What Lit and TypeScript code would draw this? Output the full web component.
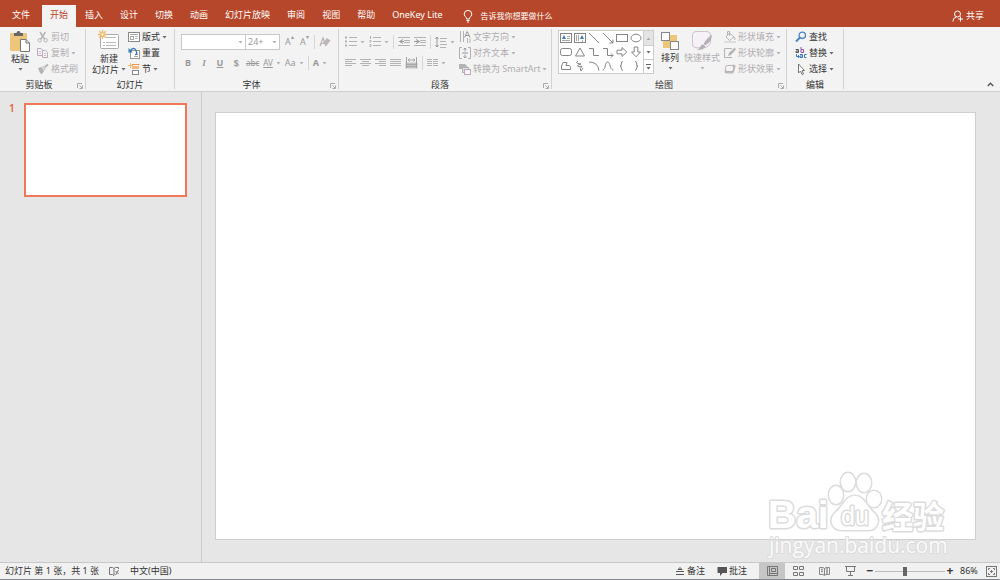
import { LitElement, html, svg, css, nothing } from "lit";
import { customElement, property, state } from "lit/decorators.js";

const G = "#b4b2b4";
const D = "#555";

const frame = (w: number, h: number, body: unknown) =>
  html`<svg width=${w} height=${h} viewBox="0 0 ${w} ${h}" fill="none" aria-hidden="true">${body}</svg>`;

const caret = (on = true) =>
  frame(5, 3, svg`<path d="M0.5 0H4.5L2.5 2.6Z" fill=${on ? "#666" : G} />`);

const lines = (rows: number[][]) =>
  svg`${rows.map((r) => svg`<path d="M${r[0]} ${r[2]}H${r[1]}" stroke=${G} />`)}`;

const icons = {
  paste: frame(22, 22, svg`
    <rect x="1" y="3" width="17" height="18" rx="1" fill="#edc67c" />
    <path d="M5 6V3H7.5Q7.5 1 9.5 1T11.5 3H14V6Z" fill="#666" />
    <path d="M11.5 9.5H17L20.5 13V21.5H11.5Z" fill="#fff" stroke="#777" />
    <path d="M17 9.5V13H20.5" stroke="#777" />`),
  cut: frame(12, 12, svg`
    <path d="M3 1L7.5 8M8.5 1L4 8" stroke=${G} stroke-width="1.4" />
    <circle cx="2.7" cy="9.3" r="1.7" stroke=${G} /><circle cx="8.7" cy="9.3" r="1.7" stroke=${G} />`),
  copy: frame(12, 12, svg`
    <path d="M0.5 1.5H4L5.5 3V8.5H0.5Z" fill="#f8f3f8" stroke="#b9aab8" />
    <path d="M5.5 3.5H8.5L10.5 5.5V10.5H5.5Z" fill="#f8f3f8" stroke="#b9aab8" />
    <path d="M2 4.5H4M2 6.5H4M7 6.5H9M7 8.5H9" stroke="#c9bfc9" />`),
  brush: frame(12, 12, svg`
    <path d="M1 5L4.5 4L7 8L4.5 11.5Q2 9 1 5Z" fill=${G} />
    <path d="M5 3.5L7 2.5L9 6L7.5 7.5Z" fill="#ccc" /><path d="M8 4L11 1.5" stroke=${G} stroke-width="1.8" />`),
  slide: frame(22, 22, svg`
    <rect x="2.5" y="4.5" width="18" height="14" rx="1" fill="#fff" stroke="#aaa" />
    <path d="M8 7.5H18M5 12.5H7M8 12.5H18M5 15.5H7M8 15.5H18" stroke="#bbb" />
    <path d="M4.5 0V9M0 4.5H9M1.3 1.3L7.7 7.7M7.7 1.3L1.3 7.7" stroke="#efb968" stroke-width="1.3" />
    <circle cx="4.5" cy="4.5" r="1.8" fill="#fff3df" stroke="#efb968" />`),
  layout: frame(12, 12, svg`
    <rect x="0.5" y="1.5" width="11" height="9" fill="#fff" stroke="#888" />
    <path d="M2 3.5H10" stroke="#aaa" /><rect x="2.5" y="5.5" width="3" height="3" stroke="#aaa" />
    <path d="M7 5.5H10M7 7.5H10" stroke="#bbb" />`),
  reset: frame(12, 12, svg`
    <rect x="2.5" y="3.5" width="9" height="8" fill="#fff" stroke="#999" />
    <path d="M6 9.5H10M8 7.5H10" stroke="#aaa" />
    <path d="M2 4Q6 -1 8 3.5T7 7.5" stroke="#3d79b8" stroke-width="1.4" /><path d="M0.5 1V5.5H5Z" fill="#3d79b8" />`),
  section: frame(12, 12, svg`
    <path d="M4 1.5H11.5" stroke="#e8954e" /><path d="M2.5 0V5M0 2.5H5" stroke="#efb968" />
    <rect x="4" y="3" width="7" height="3" fill="#f2b77f" />
    <rect x="4.5" y="7.5" width="6" height="4" fill="#fff" stroke="#888" />`),
  clear: frame(12, 12, svg`
    <path d="M1 10L4 2L7 10M2 7.5H6" stroke=${G} stroke-width="1.2" />
    <path d="M4 7L8 2L11.5 4.5L7.5 9.5Z" fill="#bcb6bc" />`),
  bullets: frame(12, 12, svg`
    ${lines([[4, 12, 1.5], [4, 12, 5.5], [4, 12, 9.5]])}
    <path d="M0 1.5H2M0 5.5H2M0 9.5H2" stroke=${G} stroke-width="2" />`),
  numbers: frame(12, 12, svg`
    ${lines([[4, 12, 1.5], [4, 12, 5.5], [4, 12, 9.5]])}
    <path d="M1.5 0V3M0.5 4.5H2V6H0.5M0.5 8.5H2V10.5H0.5" stroke=${G} />`),
  outdent: frame(12, 12, svg`
    ${lines([[0, 12, 1.5], [6, 12, 4.5], [6, 12, 6.5], [0, 12, 9.5]])}
    <path d="M5 3.5L1.5 5.5L5 7.5M2 5.5H6" stroke="#999" />`),
  indent: frame(12, 12, svg`
    ${lines([[0, 12, 1.5], [6, 12, 4.5], [6, 12, 6.5], [0, 12, 9.5]])}
    <path d="M2 3.5L5.5 5.5L2 7.5M0 5.5H5" stroke="#999" />`),
  spacing: frame(12, 12, svg`
    ${lines([[5, 12, 2.5], [5, 11, 5.5], [5, 12, 8.5], [5, 11, 11.5]])}
    <path d="M2 1V11M0.5 3L2 1L3.5 3M0.5 9L2 11L3.5 9" stroke="#999" />`),
  left: frame(11, 10, lines([[0, 11, 1.5], [0, 7, 3.5], [0, 11, 5.5], [0, 7, 7.5]])),
  center: frame(11, 10, lines([[0, 11, 1.5], [2, 9, 3.5], [0, 11, 5.5], [2, 9, 7.5]])),
  right: frame(11, 10, lines([[0, 11, 1.5], [4, 11, 3.5], [0, 11, 5.5], [4, 11, 7.5]])),
  justify: frame(11, 10, lines([[0, 11, 1.5], [0, 11, 3.5], [0, 11, 5.5], [0, 11, 7.5]])),
  spread: frame(13, 12, svg`
    <path d="M0.5 5.5H12.5V11.5H0.5Z" fill="#c4c2c4" />
    <path d="M1 7.5H12M1 9.5H12" stroke="#aaa" />
    <path d="M1.5 0V11M11.5 0V11M3 3H10M4.5 1.5L3 3L4.5 4.5M8.5 1.5L10 3L8.5 4.5" stroke="#a4a2a4" />`),
  columns: frame(11, 10, lines([[0, 5, 1.5], [0, 5, 3.5], [0, 5, 5.5], [0, 5, 7.5], [6, 11, 1.5], [6, 11, 3.5], [6, 11, 5.5], [6, 11, 7.5]])),
  direction: frame(12, 12, svg`
    <path d="M1.5 0V11M4.5 0V11M8.5 7V12" stroke=${G} />
    <path d="M5.5 6.5L8.2 0.5L11 6.5M6.5 4.5H10" stroke="#999" /><path d="M11 7.5V12" stroke=${G} />`),
  valign: frame(12, 12, svg`
    <path d="M3 0.5H0.5V11.5H3M9 0.5H11.5V11.5H9" stroke="#b9aab8" />
    <path d="M3 6H9M6 1V4.5M6 7.5V11M4.5 2.5L6 1L7.5 2.5M4.5 9.5L6 11L7.5 9.5" stroke="#999" />`),
  smart: frame(12, 12, svg`
    <path d="M0 1H6L9 4H3V6H0Z" fill=${G} /><rect x="3.5" y="4.5" width="6" height="5" fill="#ddd" stroke=${G} />
    <rect x="5.5" y="6.5" width="6" height="5" fill="#f8f3f8" stroke="#b9aab8" />`),
  arrange: frame(20, 20, svg`
    <rect x="3" y="4" width="14" height="13" fill="#edc67c" />
    <rect x="1.5" y="1.5" width="8" height="8" fill="#fff" stroke="#888" />
    <rect x="10.5" y="10.5" width="8" height="8" fill="#fff" stroke="#888" /><path d="M10 4H17V10H10Z" fill="#edc67c" />`),
  quick: frame(22, 20, svg`<g transform="translate(0 -1) scale(1 0.96)">
    <path d="M5 1.5H16Q19.5 2 19.5 5V13Q18 18 13 18.5H5Q1.5 18 1.5 15V5Q1.5 2 5 1.5Z" fill="#f5f1f6" stroke="#cdbfce" />
    <path d="M21 5Q21 12 14.5 16L12.5 14.5Q16 8 21 5Z" fill="#b5b0b5" />
    <path d="M12 15L14.5 17Q13 21 6 21Q9 19 9.5 17Q10 15 12 15Z" fill="#b5b0b5" /></g>`),
  fill: frame(12, 12, svg`
    <path d="M5.5 2L10 6L5.5 9.5L2 6Z" fill="#f8f6f8" stroke=${G} /><path d="M5.5 5V0.5H3.5V4M10 6Q12 8 10.5 9" stroke=${G} />
    <rect y="10" width="12" height="2" fill="#ddd" />`),
  outline: frame(12, 12, svg`
    <path d="M8 1.5H0.5V10.5H8" stroke=${G} /><path d="M4 9L5 6L10.5 0.8L12 2.2L6.8 8Z" fill=${G} />`),
  effect: frame(12, 12, svg`
    <path d="M4 3L10 1.5Q12 2 11.5 4L10 9Q9.5 10.5 8 10.5H2Q0 10 0.5 8Z" fill="#bbb" />
    <rect x="1.5" y="2.5" width="8" height="6" rx="2" fill="#f6f2f6" stroke=${G} />`),
  find: frame(12, 12, svg`
    <circle cx="7.3" cy="4.3" r="3.2" stroke="#4a86c0" stroke-width="1.3" /><path d="M5 6.5L1 10.5" stroke="#4a86c0" stroke-width="2" />`),
  swap: frame(12, 12, svg`
    <path d="M0.8 2.5H3.5V5.5H1V4H3.5" stroke=${D} /><path d="M6 0V5.5H8.5V2.5H6" stroke="#9355ad" />
    <path d="M5 7.5H7.5V10.5H5V9H7.5M11.5 7.5H9.5V10.5H11.5" stroke="#3d79b8" /><path d="M1.5 7V9.5H4M3 8L4.2 9.5L3 11" stroke="#3d79b8" />`),
  select: frame(12, 12, svg`<path d="M3.5 1V10L5.5 8L7 11.5L8.5 11L7 7.5H9.5Z" fill="#fff" stroke="#777" />`),
  launch: frame(6, 6, svg`<path d="M0.5 5V0.5H5M2.5 2.5L5 5M5.5 2.5V5.5H2.5" stroke="#aaa" />`),
  bulb: frame(10, 13, svg`
    <path d="M3.5 9V7.8Q1.2 6.2 1.2 4.2A3.6 3.6 0 0 1 8.8 4.2Q8.8 6.2 6.5 7.8V9ZM3.5 10.5H6.5M4 12H6" stroke="#fff" />`),
  share: frame(12, 12, svg`
    <circle cx="5.5" cy="4" r="3" stroke="#fff" /><path d="M0.8 11.5Q1 7.5 4.5 7M8.5 6.5V11.5M6 9H11" stroke="#fff" />`),
  collapse: frame(7, 5, svg`<path d="M0.8 4L3.5 1.3L6.2 4" stroke="#555" stroke-width="1.4" />`),
  proof: frame(11, 10, svg`
    <path d="M0.5 1.5H3.5L5 2.5L6.5 1.5H9.5V3M0.5 1.5V8.5H3.5L5 9.5V2.5" stroke="#777" /><path d="M6.5 5L9.5 8M9.5 4L6.5 9" stroke="#777" />`),
  notes: frame(10, 10, svg`<path d="M1 5.5H9M1 8.5H9M3 3.5L5 1.5L7 3.5Z" stroke=${D} />`),
  comment: frame(10, 10, svg`<path d="M0.5 1H10V7H5.5L3 10V7H0.5Z" fill=${D} />`),
  normal: frame(11, 10, svg`<path d="M0.5 0.5H10.5V9.5H0.5ZM2.5 0.5V9.5M4.5 2.5H8.5V5.5H4.5ZM3 7.5H10" stroke="#777" />`),
  sorter: frame(11, 10, svg`<path d="M0.5 0.5H4.5V3.5H0.5ZM6.5 0.5H10.5V3.5H6.5ZM0.5 6.5H4.5V9.5H0.5ZM6.5 6.5H10.5V9.5H6.5Z" stroke="#777" />`),
  reading: frame(11, 10, svg`<path d="M0.5 1.5H4L5.5 2.5L7 1.5H10.5V8.5H7L5.5 9.5L4 8.5H0.5ZM5.5 2V9" stroke="#888" /><path d="M2 3.5H4M2 5.5H4M8 2V8" stroke="#999" stroke-width="1.6" />`),
  show: frame(11, 10, svg`<path d="M0 0.5H11M1.5 0.5V5.5H9.5V0.5M5.5 6V9M3 9.5H8" stroke="#777" />`),
  fit: frame(11, 11, svg`<rect x="0.5" y="0.5" width="10" height="10" stroke="#777" /><path d="M2.5 4V2.5H4M7 2.5H8.5V4M8.5 7V8.5H7M4 8.5H2.5V7M5.5 4V7M4 5.5H7" stroke="#777" />`),
};

const shapes: [string, unknown][] = [
  ["文本框", svg`<rect x="0.5" y="1.5" width="11" height="9" /><path d="M7 4.5H10M7 6.5H10M2 8.5H10" stroke="#aaa" /><path d="M2 7L4 3L6 7Z" fill="#3d79b8" stroke="none" />`],
  ["竖排文本框", svg`<rect x="0.5" y="1.5" width="11" height="9" /><path d="M2.5 3V9M4.5 3V9M8.5 8V10" stroke="#aaa" /><path d="M6 7L8 3L10 7Z" fill="#3d79b8" stroke="none" />`],
  ["直线", svg`<path d="M1 1L11 11" />`],
  ["箭头", svg`<path d="M1 1L11 11M11 7.5V11H7.5" />`],
  ["矩形", svg`<rect x="0.5" y="2.5" width="11" height="7" />`],
  ["椭圆", svg`<ellipse cx="6" cy="6" rx="5" ry="3.8" />`],
  ["圆角矩形", svg`<rect x="0.5" y="2.5" width="11" height="7" rx="2" />`],
  ["三角形", svg`<path d="M6 2L10.5 10H1.5Z" />`],
  ["肘形连接符", svg`<path d="M1 2.5H5.5V9.5H11" />`],
  ["肘形箭头", svg`<path d="M1 2.5H5.5V9.5H11M9 7.5L11 9.5L9 11.5" />`],
  ["右箭头", svg`<path d="M1 4.2H6V1.5L10.8 6L6 10.5V7.8H1Z" />`],
  ["下箭头", svg`<path d="M4.2 1V6H1.5L6 10.8L10.5 6H7.8V1Z" />`],
  ["任意多边形", svg`<path d="M3 2.5H7L6 5.5H8Q11 5 10.5 9.5H1.5V6Z" />`],
  ["自由曲线", svg`<path d="M4 1Q1 3 4 3.5T7 4Q2 5.5 4 6.5T8 6Q5 9 7 11L9 8" />`],
  ["弧形", svg`<path d="M1 2Q10 2 11 10.5" />`],
  ["曲线", svg`<path d="M0.5 10C4 10 2.5 2 5.5 2C8.5 2 7.5 10 11.5 10" />`],
  ["左大括号", svg`<path d="M7 1.5Q5 1.5 5.3 4T4 6Q5.5 6 5.3 8T7 10.5" />`],
  ["右大括号", svg`<path d="M5 1.5Q7 1.5 6.7 4T8 6Q6.5 6 6.7 8T5 10.5" />`],
];

const font = css`
  :host, button, select { font-family: "Noto Sans", "Noto Sans CJK SC", sans-serif; font-size: 9px; line-height: 12px; }
  * { box-sizing: border-box; }
  svg { display: block; flex: none; }
  button { display: flex; align-items: center; border: 0; margin: 0; padding: 0; background: none; color: inherit; white-space: nowrap; }
`;

@customElement("ribbon-group")
class RibbonGroup extends LitElement {
  @property() label = "";
  @property({ type: Boolean }) launcher = false;
  static styles = [font, css`
    :host { display: flex; flex-direction: column; flex: none; margin: 2px 0 2px; padding-left: 6px; border-right: 1px solid #d2d2d2; color: #333; }
    .body { display: flex; flex: 1; }
    .foot { display: flex; align-items: center; height: 10px; padding: 2px 2px 0 0; }
    .name { flex: 1; text-align: center; padding-right: 4px; }
    .launch { padding: 1px 0 0 4px; }
  `];
  render() {
    return html`<div class="body"><slot></slot></div>
      <div class="foot"><span class="name">${this.label}</span>
      ${this.launcher ? html`<button class="launch" aria-label="${this.label}设置">${icons.launch}</button>` : nothing}</div>`;
  }
}

@customElement("app-root")
class AppRoot extends LitElement {
  @state() private tab = "开始";
  @state() private zoom = 86;

  static styles = [font, css`
    :host { display: flex; flex-direction: column; height: 100vh; overflow: hidden; background: #e6e6e6; color: #444; }
    .tabs { display: flex; align-items: flex-end; gap: 1px; height: 27px; flex: none; padding: 0 16px 0 4px; background: #b7472a; color: #fff; }
    .tab { height: 22px; padding: 0 8px 2px; }
    .tab:first-child { margin-right: 3px; }
    .tab.on { background: #f3f3f3; color: #b7472a; }
    .tell { height: 22px; gap: 8px; margin-left: 11px; font-size: 8px; }
    .share { height: 22px; gap: 2px; margin-left: auto; }
    .ribbon { display: flex; height: 65px; flex: none; background: #f3f3f3; border-bottom: 1px solid #d0d0d0; }
    .clip { width: 86px; padding-left: 9px; }
    .slides { width: 89px; }
    .type { width: 164px; }
    .para { width: 213px; }
    .draw { width: 235px; }
    .edit { width: 57px; }
    .big { flex-direction: column; flex: none; align-self: flex-start; line-height: 11px; padding-top: 1px; }
    .big svg + span { margin-top: 1px; }
    .big span + svg { margin-top: 4px; }
    .tall { padding-top: 2px; }
    .with { display: flex; align-items: center; gap: 2px; }
    .col { display: flex; flex-direction: column; margin-left: 4px; }
    .col button { gap: 2px; }
    .col button:not(.big) { height: 16px; }
    .col .big { gap: 0; }
    .slides .col, .edit .col { margin-left: 2px; }
    .clip .col, .gallery + .col { margin-left: 6px; }
    .off { color: #b0aeb0; }
    .rows { display: flex; flex-direction: column; gap: 5px; padding-top: 5px; }
    .row { display: flex; align-items: center; height: 16px; gap: 4px; color: #999; }
    .row button { justify-content: center; min-width: 11px; height: 16px; gap: 3px; }
    .combo { display: grid; align-items: center; }
    .combo > * { grid-area: 1 / 1; }
    .combo svg { justify-self: end; margin-right: 3px; pointer-events: none; }
    .combo select { appearance: none; height: 16px; border: 1px solid #c8c8c8; border-radius: 0; background: #fff; color: #999; padding: 0 2px; margin: 0; opacity: 1; }
    .face select { width: 65px; }
    .size select { width: 35px; }
    .row .combo + .combo { margin-left: -5px; }
    .sep { width: 1px; height: 14px; background: #d6d6d6; }
    .marks { padding-left: 1px; }
    .marks button { min-width: 12px; }
    .bold { font-weight: 700; }
    .ital { font-style: italic; font-family: "Liberation Serif", serif; font-weight: 700; }
    .under { text-decoration: underline; font-weight: 700; }
    .shade { font-weight: 700; text-shadow: 1px 1px #ccc; }
    .strike { text-decoration: line-through; font-size: 8px; }
    .track { text-decoration: underline; font-size: 8px; }
    .row sup { font-size: 6px; line-height: 6px; align-self: flex-start; margin-left: -3px; }
    .gallery { display: flex; height: 44px; margin-top: 1px; border: 1px solid #ccc; background: #fff; }
    .shapes { display: grid; grid-template-columns: repeat(6, 14px); grid-auto-rows: 14px; }
    .shapes button { justify-content: center; }
    .shapes svg { stroke: #858585; }
    .scroll { display: grid; grid-template-rows: repeat(3, 14px); width: 10px; border-left: 1px solid #ccc; }
    .scroll button { justify-content: center; }
    .scroll button + button { border-top: 1px solid #ccc; }
    .scroll button:first-child { background: #e4e4e4; }
    .collapse { align-self: flex-end; margin: 0 6px 4px auto; }
    .main { display: flex; flex: 1; min-height: 0; }
    .thumbs { display: flex; gap: 9px; width: 202px; flex: none; padding: 11px 14px 0 9px; border-right: 1px solid #cdcdcd; }
    .num { color: #e85f3c; font-size: 10px; line-height: 10px; width: 6px; font-weight: 600; }
    .thumb { flex: 1; height: 94px; border: 2px solid #f0785a; background: #fff; }
    .stage { position: relative; display: flex; flex: 1; padding: 20px 24px 22px 13px; }
    .page { flex: 1; background: #fff; border: 1px solid #cfcfcf; }
    .mark { position: absolute; right: 50px; bottom: 0; }
    .status { display: flex; align-items: center; height: 18px; flex: none; padding: 0 3px 0 5px; background: #f1f1f1; border-top: 1px solid #c8c8c8; border-bottom: 1px solid #85858d; color: #333; }
    .status button { height: 16px; gap: 2px; }
    .lang { margin-left: 10px; }
    .proof { margin-left: 10px; }
    .notes { margin-left: auto; }
    .talk { margin: 0 12px 0 12px; }
    .status .view { width: 26px; justify-content: center; }
    .status .view.on { background: #c6c6c6; }
    .status .sign { width: 10px; justify-content: center; font-size: 12px; font-weight: 700; }
    .status .view + .sign { margin-left: 2px; }
    .range { appearance: none; width: 70px; height: 10px; margin: 0; background: linear-gradient(#bbb, #bbb) center / 100% 1px no-repeat; }
    .range::-webkit-slider-thumb { appearance: none; width: 4px; height: 9px; background: #666; }
    .pct { width: 19px; margin: 0 7px 0 5px; }
  `];

  private small(icon: unknown, text: string, arrow = false, on = true) {
    return html`<button class=${on ? "" : "off"}>${icon}<span>${text}</span>${arrow ? caret(on) : nothing}</button>`;
  }

  private tool(label: string, body: unknown, arrow = false, cls = "") {
    return html`<button class=${cls} aria-label=${label}>${body}${arrow ? caret(false) : nothing}</button>`;
  }

  render() {
    const tabs = ["文件", "开始", "插入", "设计", "切换", "动画", "幻灯片放映", "审阅", "视图", "帮助", "OneKey Lite"];
    const sep = html`<span class="sep"></span>`;
    return html`
      <nav class="tabs">
        ${tabs.map((t) => html`<button class="tab ${t === this.tab ? "on" : ""}" @click=${() => (this.tab = t)}>${t}</button>`)}
        <button class="tell">${icons.bulb}<span>告诉我你想要做什么</span></button>
        <button class="share">${icons.share}<span>共享</span></button>
      </nav>
      <section class="ribbon">
        <ribbon-group class="clip" label="剪贴板" launcher>
          <button class="big">${icons.paste}<span>粘贴</span>${caret()}</button>
          <div class="col">
            ${this.small(icons.cut, "剪切", false, false)}
            ${this.small(icons.copy, "复制", true, false)}
            ${this.small(icons.brush, "格式刷", false, false)}
          </div>
        </ribbon-group>
        <ribbon-group class="slides" label="幻灯片">
          <button class="big">${icons.slide}<span>新建</span><span class="with">幻灯片${caret()}</span></button>
          <div class="col">
            ${this.small(icons.layout, "版式", true)}
            ${this.small(icons.reset, "重置")}
            ${this.small(icons.section, "节", true)}
          </div>
        </ribbon-group>
        <ribbon-group class="type" label="字体" launcher>
          <div class="rows">
            <div class="row">
              <label class="combo face"><select aria-label="字体"><option></option></select>${caret(false)}</label>
              <label class="combo size"><select aria-label="字号"><option>24+</option></select>${caret(false)}</label>
              ${this.tool("增大字号", html`<span>A</span><sup>▴</sup>`)}
              ${this.tool("减小字号", html`<span>A</span><sup>▾</sup>`)}
              ${sep}${this.tool("清除格式", icons.clear)}
            </div>
            <div class="row marks">
              ${this.tool("加粗", "B", false, "bold")}
              ${this.tool("倾斜", "I", false, "ital")}
              ${this.tool("下划线", "U", false, "under")}
              ${this.tool("阴影", "S", false, "shade")}
              ${this.tool("删除线", "abc", false, "strike")}
              ${this.tool("字符间距", html`<span class="track">AV</span>`, true)}
              ${this.tool("更改大小写", "Aa", true)}
              ${sep}${this.tool("字体颜色", "A", true, "bold")}
            </div>
          </div>
        </ribbon-group>
        <ribbon-group class="para" label="段落" launcher>
          <div class="rows">
            <div class="row">
              ${this.tool("项目符号", icons.bullets, true)}
              ${this.tool("编号", icons.numbers, true)}
              ${sep}${this.tool("减少缩进", icons.outdent)}${this.tool("增加缩进", icons.indent)}
              ${sep}${this.tool("行距", icons.spacing, true)}
            </div>
            <div class="row">
              ${this.tool("左对齐", icons.left)}${this.tool("居中", icons.center)}
              ${this.tool("右对齐", icons.right)}${this.tool("两端对齐", icons.justify)}
              ${this.tool("分散对齐", icons.spread)}${sep}${this.tool("分栏", icons.columns, true)}
            </div>
          </div>
          <div class="col">
            ${this.small(icons.direction, "文字方向", true, false)}
            ${this.small(icons.valign, "对齐文本", true, false)}
            ${this.small(icons.smart, "转换为 SmartArt", true, false)}
          </div>
        </ribbon-group>
        <ribbon-group class="draw" label="绘图" launcher>
          <div class="gallery">
            <div class="shapes">${shapes.map(([n, s]) => html`<button aria-label=${n}>${frame(12, 12, s)}</button>`)}</div>
            <div class="scroll">
              <button aria-label="上一行">${frame(5, 3, svg`<path d="M0.5 3H4.5L2.5 0.4Z" fill="#aaa" />`)}</button>
              <button aria-label="下一行">${caret()}</button>
              <button aria-label="其他">${frame(5, 6, svg`<path d="M0 0.5H5" stroke="#666" /><path d="M0.5 3H4.5L2.5 5.6Z" fill="#666" />`)}</button>
            </div>
          </div>
          <div class="col"><button class="big tall">${icons.arrange}<span>排列</span>${caret()}</button></div>
          <div class="col"><button class="big tall off">${icons.quick}<span>快速样式</span>${caret(false)}</button></div>
          <div class="col">
            ${this.small(icons.fill, "形状填充", true, false)}
            ${this.small(icons.outline, "形状轮廓", true, false)}
            ${this.small(icons.effect, "形状效果", true, false)}
          </div>
        </ribbon-group>
        <ribbon-group class="edit" label="编辑">
          <div class="col">
            ${this.small(icons.find, "查找")}
            ${this.small(icons.swap, "替换", true)}
            ${this.small(icons.select, "选择", true)}
          </div>
        </ribbon-group>
        <button class="collapse" aria-label="折叠功能区">${icons.collapse}</button>
      </section>
      <main class="main">
        <aside class="thumbs"><span class="num">1</span><div class="thumb"></div></aside>
        <div class="stage">
          <div class="page"></div>
          <svg class="mark" width="188" height="92" viewBox="0 0 188 92" fill="#fff" stroke="#dcdcdc" stroke-width="3" stroke-linejoin="round" paint-order="stroke" font-family="Open Sans, Noto Sans CJK SC, sans-serif">
            <text x="6" y="58" font-size="39" font-weight="700" font-family="Liberation Sans, sans-serif">Bai</text>
            <path d="M93 26C102 26 105 37 112 43C119 49 116 60 106 60C99 60 87 60 80 60C69 60 67 49 73 43C81 37 83 26 93 26Z" />
            <ellipse cx="74" cy="25" rx="7" ry="9" /><ellipse cx="86" cy="12" rx="7" ry="9" />
            <ellipse cx="102" cy="13" rx="7" ry="9" /><ellipse cx="112" cy="29" rx="7" ry="8" />
            <text x="79" y="55" font-size="25" font-family="Liberation Sans, sans-serif">du</text>
            <text x="120" y="58" font-size="31" font-weight="700">经验</text>
            <text x="7" y="83" font-size="21" stroke-width="2" font-weight="400" fill="#fafafa">jingyan.baidu.com</text>
          </svg>
        </div>
      </main>
      <footer class="status">
        <span>幻灯片 第 1 张，共 1 张</span>
        <button class="proof" aria-label="拼写检查">${icons.proof}</button>
        <button class="lang">中文(中国)</button>
        <button class="notes">${icons.notes}<span>备注</span></button>
        <button class="talk">${icons.comment}<span>批注</span></button>
        <button class="view on" aria-label="普通视图">${icons.normal}</button>
        <button class="view" aria-label="幻灯片浏览">${icons.sorter}</button>
        <button class="view" aria-label="阅读视图">${icons.reading}</button>
        <button class="view" aria-label="幻灯片放映">${icons.show}</button>
        <button class="sign" aria-label="缩小">−</button>
        <input class="range" type="range" min="0" max="200" aria-label="缩放" .value=${String(this.zoom)}
          @input=${(e: Event) => (this.zoom = Number((e.target as HTMLInputElement).value))} />
        <button class="sign" aria-label="放大">+</button>
        <span class="pct">${this.zoom}%</span>
        <button aria-label="适应窗口">${icons.fit}</button>
      </footer>`;
  }
}
